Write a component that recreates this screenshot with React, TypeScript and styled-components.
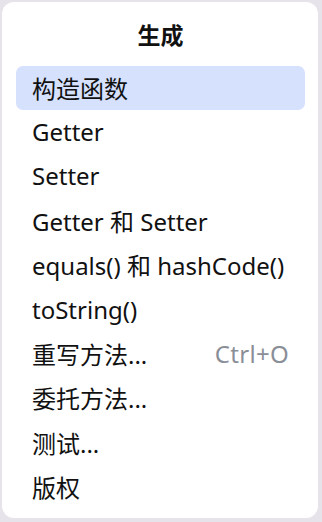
import styled, { createGlobalStyle } from 'styled-components';

const GlobalStyle = createGlobalStyle`
  html, body {
    margin: 0;
    padding: 0;
    background: #e6e4ea;
  }
  body {
    font-family: "Noto Sans", "Noto Sans CJK SC", sans-serif;
    color: #111;
  }
`

const Card = styled.div`
  display: flex;
  flex-direction: column;
  width: 316px;
  height: 516px;
  margin: 2px;
  background: #fff;
  border-radius: 12px;
  box-sizing: border-box;
  padding: 0 13px 8px 14px;
`

const Title = styled.div`
  height: 64px;
  display: flex;
  align-items: center;
  justify-content: center;
  font-size: 23px;
  font-weight: 700;
  box-sizing: border-box;
`

const List = styled.div`
  display: flex;
  flex-direction: column;
`

const Item = styled.div<{ $active?: boolean }>`
  display: flex;
  align-items: center;
  justify-content: space-between;
  height: 44.4px;
  padding: 0 16px 2px 16px;
  box-sizing: border-box;
  border-radius: 7px;
  font-size: 24px;
  white-space: nowrap;
  background: ${p => (p.$active ? '#d5e1fd' : 'transparent')};
  .shortcut{
    color: #8a8e97;
    letter-spacing: 0.3px;
  }
`

const items: { label: string; shortcut?: string }[] = [
  { label: '构造函数' },
  { label: 'Getter' },
  { label: 'Setter' },
  { label: 'Getter 和 Setter' },
  { label: 'equals() 和 hashCode()' },
  { label: 'toString()' },
  { label: '重写方法...', shortcut: 'Ctrl+O' },
  { label: '委托方法...' },
  { label: '测试...' },
  { label: '版权' },
]

export default function App() {
  return (
    <>
      <GlobalStyle />
      <Card>
        <Title>生成</Title>
        <List>
          {items.map((it, i) => (
            <Item key={it.label} $active={i === 0}>
              <span>{it.label}</span>
              {it.shortcut && <span className="shortcut">{it.shortcut}</span>}
            </Item>
          ))}
        </List>
      </Card>
    </>
  )
}
